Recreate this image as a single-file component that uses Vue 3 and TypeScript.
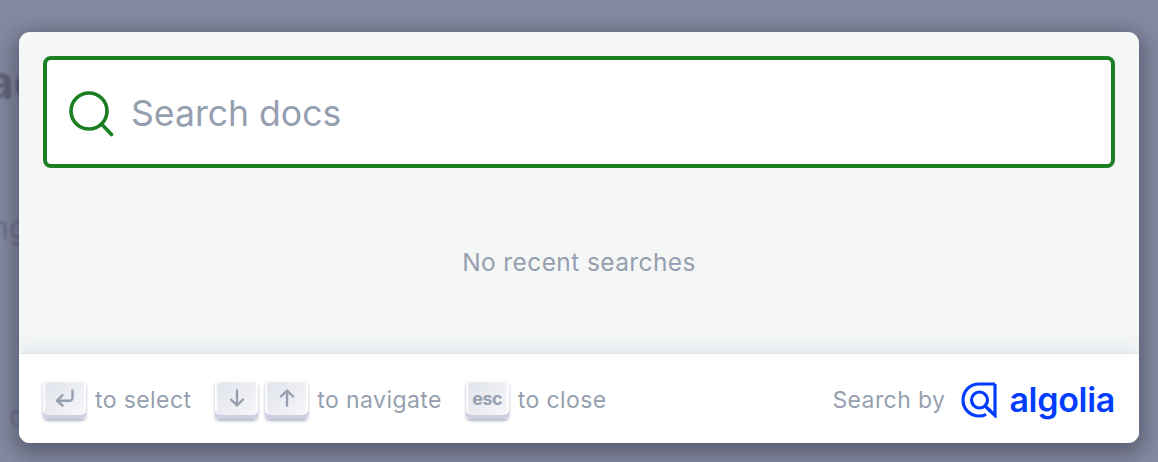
<script setup lang="ts">
const backdropText: { text: string; cls: string }[] = [
  { text: 'ac', cls: 'b1' },
  { text: 'ng', cls: 'b2' },
  { text: 'c', cls: 'b3' },
]
</script>

<template>
  <div class="page">
    <span v-for="b in backdropText" :key="b.cls" class="blur" :class="b.cls">{{ b.text }}</span>
    <div class="modal">
      <div class="body">
        <div class="searchbox">
          <svg class="glass" width="46" height="46" viewBox="0 0 46 46" fill="none" stroke="#1a7f22" stroke-width="3.6" stroke-linecap="round">
            <circle cx="20" cy="20" r="18" />
            <path d="M32.500 33 L42.500 43.500" />
          </svg>
          <span class="placeholder">Search docs</span>
        </div>
        <div class="empty">No recent searches</div>
      </div>
      <div class="footer">
        <div class="cmds">
          <div class="cmd">
            <kbd class="key">
              <svg width="22" height="20" viewBox="0 0 22 20" fill="none" stroke="#969faf" stroke-width="2.4" stroke-linecap="round" stroke-linejoin="round">
                <path d="M18.500 2.500v7.200a3 3 0 0 1-3 3H3M8.500 7.200 3 12.700l5.500 5" />
              </svg>
            </kbd>
            <span class="label">to select</span>
          </div>
          <div class="cmd">
            <kbd class="key">
              <svg width="20" height="20" viewBox="0 0 20 20" fill="none" stroke="#969faf" stroke-width="2.4" stroke-linecap="round" stroke-linejoin="round">
                <path d="M10 2.500v15M4 11.500l6 6 6-6" />
              </svg>
            </kbd>
            <kbd class="key">
              <svg width="20" height="20" viewBox="0 0 20 20" fill="none" stroke="#969faf" stroke-width="2.4" stroke-linecap="round" stroke-linejoin="round">
                <path d="M10 17.500v-15M4 8.500l6-6 6 6" />
              </svg>
            </kbd>
            <span class="label">to navigate</span>
          </div>
          <div class="cmd">
            <kbd class="key esc">esc</kbd>
            <span class="label">to close</span>
          </div>
        </div>
        <div class="brand">
          <span class="label">Search by</span>
          <svg class="mark" width="36" height="36" viewBox="0 0 36 36" fill="none" stroke="#003dff" stroke-width="3.2">
            <path d="M34 2v31.500l-7.500-7.200" />
            <path d="M34 2H18C9 2 2 9 2 18s7 16 16 16c3 0 5-.6 7-1.700" />
            <circle cx="18.500" cy="18" r="8" />
            <path d="M24 24l6 5.500" />
          </svg>
          <span class="wordmark">algolia</span>
        </div>
      </div>
    </div>
  </div>
</template>

<style scoped>
.page {
  position: relative;
  box-sizing: border-box;
  width: 1158px;
  height: 462px;
  padding: 32px 19px 19px;
  overflow: hidden;
  background: #858aa0;
  font-family: Inter, "Liberation Sans", sans-serif;
}
.blur {
  position: absolute;
  font-weight: 700;
  color: #5f6379;
  filter: blur(1.2px);
  line-height: 1;
}
.b1 { left: -14px; top: 58px; font-size: 48px; }
.b2 { left: -10px; top: 212px; font-size: 32px; font-weight: 400; color: #6c7087; }
.b3 { left: 9px; top: 402px; font-size: 28px; font-weight: 400; color: #6c7087; }
.modal {
  position: relative;
  height: 411px;
  display: flex;
  flex-direction: column;
  border-radius: 11px;
  overflow: hidden;
  background: #f5f7f6;
  box-shadow: 0 6px 22px 4px rgba(40, 42, 62, 0.5);
}
.body {
  flex: 1;
  padding: 24px;
  display: flex;
  flex-direction: column;
}
.searchbox {
  box-sizing: border-box;
  height: 112px;
  display: flex;
  align-items: center;
  gap: 16px;
  padding-left: 22px;
  padding-top: 3px;
  background: #fff;
  border: 4px solid #1a7f22;
  border-radius: 8px;
}
.glass { flex: none; }
.placeholder {
  font-size: 35.600px;
  color: #969faf;
  line-height: 1;
}
.empty {
  margin-top: 79px;
  text-align: center;
  font-size: 24.500px;
  line-height: 30px;
  letter-spacing: 0.4px;
  color: #969faf;
}
.footer {
  flex: none;
  box-sizing: border-box;
  height: 89px;
  display: flex;
  align-items: center;
  justify-content: space-between;
  padding: 2px 24px 0;
  background: #fff;
  box-shadow: 0 -1px 0 0 #e0e3e8, 0 -6px 14px 0 rgba(69, 98, 155, 0.1);
}
.cmds {
  display: flex;
  align-items: center;
  gap: 24px;
}
.cmd {
  display: flex;
  align-items: center;
  gap: 7px;
}
.cmd .label { margin-left: 2px; }
.label {
  font-size: 23px;
  color: #969faf;
  letter-spacing: 0.4px;
}
.key {
  box-sizing: border-box;
  width: 43px;
  height: 39px;
  display: flex;
  align-items: center;
  justify-content: center;
  padding-bottom: 3px;
  border-radius: 5px;
  background: linear-gradient(-225deg, #e0e3ec, #f8f8fa);
  box-shadow: inset 0 -4px 0 0 #cdcfe2, inset 0 0 2px 2px #fff, 0 2px 3px 0 rgba(30, 35, 90, 0.35);
}
.esc {
  font-family: Inter, "Liberation Sans", sans-serif;
  font-size: 18px;
  font-weight: 700;
  color: #969faf;
  letter-spacing: -0.5px;
}
.brand {
  display: flex;
  align-items: center;
  gap: 16px;
}
.mark { flex: none; }
.wordmark {
  margin-left: -4px;
  font-size: 34px;
  font-weight: 600;
  line-height: 36px;
  letter-spacing: -0.3px;
  color: #003dff;
}
</style>
